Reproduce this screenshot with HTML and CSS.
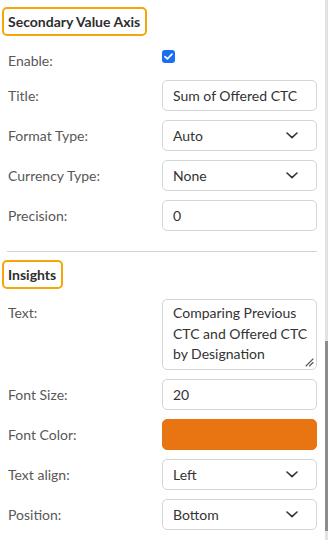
FILE: index.html
```html
<!DOCTYPE html>
<html lang="en">
<head>
  <meta charset="UTF-8">
  <meta name="viewport" content="width=device-width, initial-scale=1.0">
  <title>Chart Properties</title>
  <link rel="stylesheet" href="styles.css">
</head>
<body>
  <div class="panel">
    <div class="content">
      <section class="group">
        <h3 class="group-title">Secondary Value Axis</h3>
        <div class="row row-check">
          <label>Enable:</label>
          <span class="check">
            <svg width="9" height="7" viewBox="0 0 9 7"><path d="M1 3.6 L3.4 5.8 L8 1.2" fill="none" stroke="#fff" stroke-width="1.7" stroke-linecap="round" stroke-linejoin="round"/></svg>
          </span>
        </div>
        <div class="row">
          <label>Title:</label>
          <input class="field" type="text" value="Sum of Offered CTC">
        </div>
        <div class="row">
          <label>Format Type:</label>
          <div class="field select"><span>Auto</span>
            <svg width="12" height="7" viewBox="0 0 12 7"><path d="M1 1 L6 5.6 L11 1" fill="none" stroke="#333" stroke-width="1.6" stroke-linecap="round" stroke-linejoin="round"/></svg>
          </div>
        </div>
        <div class="row">
          <label>Currency Type:</label>
          <div class="field select"><span>None</span>
            <svg width="12" height="7" viewBox="0 0 12 7"><path d="M1 1 L6 5.6 L11 1" fill="none" stroke="#333" stroke-width="1.6" stroke-linecap="round" stroke-linejoin="round"/></svg>
          </div>
        </div>
        <div class="row">
          <label>Precision:</label>
          <input class="field" type="text" value="0">
        </div>
      </section>

      <hr class="divider">

      <section class="group">
        <h3 class="group-title">Insights</h3>
        <div class="row row-text">
          <label>Text:</label>
          <div class="area-wrap">
            <textarea class="field area">Comparing Previous CTC and Offered CTC by Designation</textarea>
            <svg class="grip" width="9" height="9" viewBox="0 0 9 9"><path d="M8 1 L1 8 M8 4.5 L4.5 8" fill="none" stroke="#555" stroke-width="1.1" stroke-linecap="round"/></svg>
          </div>
        </div>
        <div class="row">
          <label>Font Size:</label>
          <input class="field" type="text" value="20">
        </div>
        <div class="row">
          <label>Font Color:</label>
          <div class="field swatch"></div>
        </div>
        <div class="row">
          <label>Text align:</label>
          <div class="field select"><span>Left</span>
            <svg width="12" height="7" viewBox="0 0 12 7"><path d="M1 1 L6 5.6 L11 1" fill="none" stroke="#333" stroke-width="1.6" stroke-linecap="round" stroke-linejoin="round"/></svg>
          </div>
        </div>
        <div class="row">
          <label>Position:</label>
          <div class="field select"><span>Bottom</span>
            <svg width="12" height="7" viewBox="0 0 12 7"><path d="M1 1 L6 5.6 L11 1" fill="none" stroke="#333" stroke-width="1.6" stroke-linecap="round" stroke-linejoin="round"/></svg>
          </div>
        </div>
      </section>
    </div>
    <div class="scrollbar"><div class="thumb"></div></div>
  </div>
</body>
</html>
```

FILE: styles.css
```css
:root {
  --label: #585858;
  --text: #333333;
  --border: #d6d6d6;
  --highlight: #f5a70a;
  --blue: #1b6ef3;
  --orange: #e87511;
}
* { box-sizing: border-box; margin: 0; padding: 0; }
body {
  font-family: Lato, "Noto Sans", sans-serif;
  font-size: 14px;
  color: var(--text);
  background: #fff;
}
.panel {
  display: flex;
  width: 328px;
  height: 540px;
  overflow: hidden;
}
.content {
  width: 325px;
  padding: 7px 0 0 8px;
}
.group-title {
  display: inline-block;
  margin-left: -6px;
  padding: 3px 5px 3px 4px;
  border: 2px solid var(--highlight);
  border-radius: 5px;
  font-size: 14px;
  font-weight: bold;
  line-height: 19px;
  color: #2e2e2e;
}
.row {
  display: grid;
  grid-template-columns: 154px 155px;
  align-items: center;
  min-height: 31px;
  margin-top: 9px;
}
.row label {
  color: var(--label);
  line-height: 20px;
}
.row-check {
  min-height: 21px;
  margin-top: 14px;
  align-items: start;
}
.row-check label { padding-top: 1px; }
.check {
  display: flex;
  align-items: center;
  justify-content: center;
  width: 13px;
  height: 13px;
  border-radius: 3px;
  background: var(--blue);
}
.row-text {
  align-items: start;
  margin-top: 10px;
}
.row-text label { padding-top: 4px; }
.field {
  width: 155px;
  height: 31px;
  border: 1px solid var(--border);
  border-radius: 5px;
  background: #fff;
  font-family: inherit;
  font-size: 14px;
  color: var(--text);
  padding: 0 10px;
  outline: none;
}
.select {
  display: flex;
  align-items: center;
  justify-content: space-between;
  padding: 0 18px 0 10px;
}
.area-wrap {
  position: relative;
  width: 155px;
  height: 71px;
}
.area {
  display: block;
  height: 71px;
  padding: 3px 6px 3px 10px;
  line-height: 20.5px;
  resize: none;
  overflow: hidden;
}
.grip {
  position: absolute;
  right: 3px;
  bottom: 3px;
}
.swatch {
  background: var(--orange);
  border-color: var(--orange);
}
.divider {
  border: none;
  border-top: 1px solid #d2d2d2;
  width: 310px;
  margin: 20px 0 8px -1px;
}
.scrollbar {
  width: 3px;
  height: 540px;
  background: #e2e2e2;
  padding-top: 341px;
}
.thumb {
  height: 190px;
  background: #8c8c8c;
}
```
